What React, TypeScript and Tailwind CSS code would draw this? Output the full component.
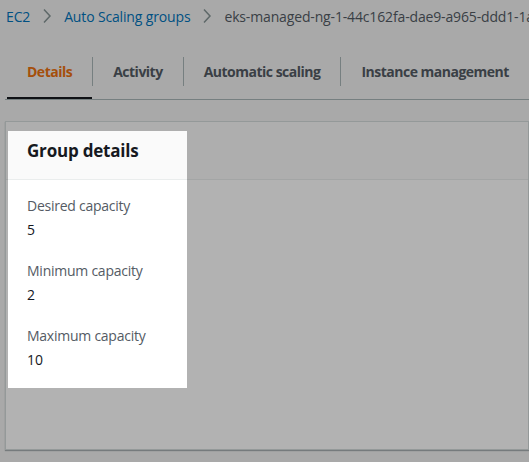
import React from "react";

function Chevron() {
  return (
    <svg width="10" height="16" viewBox="0 0 10 16" className="mx-[12px] shrink-0" aria-hidden>
      <path d="M2 1.5 L8 8 L2 14.5" fill="none" stroke="#879596" strokeWidth="1.5" />
    </svg>
  );
}

function Field({ label, value, first }: { label: string; value: string; first?: boolean }) {
  return (
    <div className={first ? "" : "mt-[19px]"}>
      <div className="text-[14px] leading-[22px] tracking-[-0.25px] text-[#545b64]">{label}</div>
      <div className="mt-[2px] text-[14px] leading-[22px] text-[#16191f]">{value}</div>
    </div>
  );
}

export default function App() {
  const tabs = ["Details", "Activity", "Automatic scaling", "Instance management"];
  return (
    <div
      className="relative h-[462px] w-full overflow-hidden bg-[#f2f3f3]"
      style={{ fontFamily: '"Open Sans", "Noto Sans", Arial, sans-serif' }}
    >
      {/* Breadcrumb */}
      <div className="flex h-[32px] items-center whitespace-nowrap pl-[6px] text-[14px] tracking-[-0.15px]">
        <span className="text-[#0073bb]">EC2</span>
        <Chevron />
        <span className="text-[#0073bb]">Auto Scaling groups</span>
        <Chevron />
        <span className="text-[#545b64]">eks-managed-ng-1-44c162fa-dae9-a965-ddd1-1ab2c3d4e5f6</span>
      </div>

      {/* Tabs */}
      <div className="ml-[5px] mt-[22px] flex h-[46px] items-stretch border-b border-[#aab7b8]">
        <div className="ml-[2px] flex items-stretch">
          {tabs.map((t, i) => (
            <div key={t} className="flex items-stretch">
              {i > 0 && <div className="mt-[3px] h-[29px] w-px bg-[#aab7b8]" />}
              <div
                className={
                  "relative flex items-center whitespace-nowrap px-[20px] pb-[11px] text-[14px] font-bold tracking-[-0.5px] " +
                  (i === 0 ? "text-[#ec7211]" : "text-[#545b64]")
                }
              >
                {t}
                {i === 0 && <div className="absolute bottom-0 left-0 right-0 h-[2px] bg-[#16191f]" />}
              </div>
            </div>
          ))}
        </div>
      </div>

      {/* Container */}
      <div className="ml-[5px] mt-[21px] h-[329px] w-[524px] border border-[#d5dbdb] bg-white shadow-[0_1px_1px_0_rgba(0,28,36,0.3)]">
        <div className="flex h-[58px] items-center border-b border-[#eaeded] bg-[#fafafa] px-[21px]">
          <h2 className="text-[17px] font-bold leading-[24px] tracking-[-0.2px] text-[#16191f]">Group details</h2>
        </div>
        <div className="px-[21px] pt-[15px]">
          <Field label="Desired capacity" value="5" first />
          <Field label="Minimum capacity" value="2" />
          <Field label="Maximum capacity" value="10" />
        </div>
      </div>

      {/* Spotlight overlay */}
      <div className="pointer-events-none absolute left-[8px] top-[131px] h-[257px] w-[179px] shadow-[0_0_0_2000px_rgba(0,0,0,0.3)]" />
    </div>
  );
}
